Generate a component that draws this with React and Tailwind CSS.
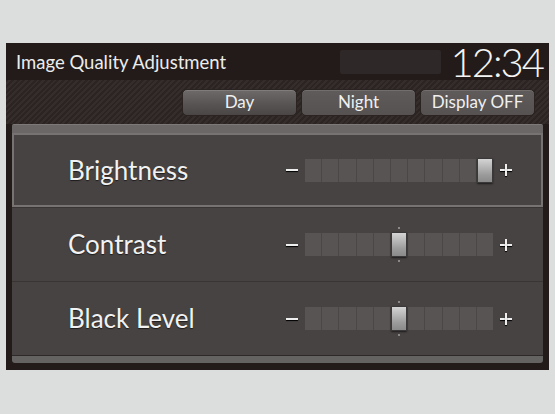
import React from "react";

const rows = [
  { label: "Brightness", value: 10, selected: true, dots: false },
  { label: "Contrast", value: 5, selected: false, dots: true },
  { label: "Black Level", value: 5, selected: false, dots: true },
];

function Slider({ value, dots }) {
  return (
    <div className="flex items-center">
      <span className="w-[12px] h-[2px] bg-[#eeeeee] shadow-[0_1px_1px_#000]" />
      <div className="ml-[7px] flex h-[23px] w-[188px] gap-px bg-[#4b4746] p-0">
        {Array.from({ length: 11 }).map((_, i) =>
          i === value ? (
            <div key={i} className="relative flex-1">
              {dots && (
                <>
                  <span className="absolute left-1/2 -translate-x-1/2 top-[-6px] w-[2px] h-[2px] bg-[#8a8888]" />
                  <span className="absolute left-1/2 -translate-x-1/2 bottom-[-6px] w-[2px] h-[2px] bg-[#8a8888]" />
                </>
              )}
              <div className="absolute inset-x-0 top-[-1px] bottom-[-1px] rounded-[1px] border border-[#3a3838] bg-[linear-gradient(to_bottom,#d4d4d4,#9a9a9a_70%,#8a8a8a)] shadow-[0_1px_2px_rgba(0,0,0,0.6)]" />
            </div>
          ) : (
            <div key={i} className="flex-1 bg-[#575453]" />
          )
        )}
      </div>
      <span className="relative ml-[7px] w-[12px] h-[12px]">
        <span className="absolute left-0 right-0 top-[5px] h-[2px] bg-[#eeeeee] shadow-[0_1px_1px_#000]" />
        <span className="absolute top-0 bottom-0 left-[5px] w-[2px] bg-[#eeeeee] shadow-[0_1px_1px_#000]" />
      </span>
    </div>
  );
}

export default function App() {
  return (
    <div className="w-[555px] h-[414px] bg-[#dcdedd] pt-[43px] pl-[6px] font-['Lato',sans-serif]">
      <div className="w-[543px] h-[327px] bg-[#231b1a] flex flex-col">
        {/* header */}
        <div className="h-[37px] flex items-center pl-[10px] pr-[6px]">
          <span className="text-[18.5px] text-[#ececec] mt-[3px]">Image Quality Adjustment</span>
          <div className="ml-auto w-[101px] h-[24px] bg-[#2f2828] rounded-[2px] mt-[1px]" />
          <span className="ml-[10px] text-[40px] font-light text-[#f4f4f4] leading-none tracking-[-2px] mt-[1px]">
            12:34
          </span>
        </div>
        {/* tab bar */}
        <div className="h-[44px] flex items-center justify-end gap-[4px] pr-[14px] bg-[repeating-linear-gradient(135deg,#2b2423_0px,#2b2423_2px,#342d2c_2px,#342d2c_4px)]">
          {[
            { t: "Day", cls: "bg-[linear-gradient(to_bottom,#6e6a69,#575352_60%,#4a4645)]" },
            { t: "Night", cls: "bg-[linear-gradient(to_bottom,#5f5b5a,#565251)]" },
            { t: "Display OFF", cls: "bg-[linear-gradient(to_bottom,#5f5b5a,#565251)]" },
          ].map((b) => (
            <div
              key={b.t}
              className={`w-[115px] h-[27px] rounded-[5px] flex items-center justify-center text-[17px] text-[#f0f0f0] border border-[#2a2322] shadow-[inset_0_1px_0_rgba(255,255,255,0.12)] ${b.cls}`}
            >
              {b.t}
            </div>
          ))}
        </div>
        {/* panel */}
        <div className="mx-[6px] flex flex-col">
          <div className="h-[9px] rounded-t-[2px] bg-[#6a6766] border-t border-[#7c7978]" />
          {rows.map((r, idx) => (
            <div
              key={r.label}
              className={`h-[74px] flex items-center bg-[#474342] ${
                r.selected
                  ? "border-2 border-[#767372] pl-[54px] bg-[#4a4645]"
                  : "pl-[56px] " + (idx > 0 ? "border-t border-[#3a3433]" : "")
              }`}
            >
              <span className="w-[218px] text-[26px] text-[#f2f2f2] [text-shadow:0_1px_1px_rgba(0,0,0,0.6)]">
                {r.label}
              </span>
              <Slider value={r.value} dots={r.dots} />
            </div>
          ))}
          <div className="h-[8px] rounded-b-[3px] bg-[#656262] border-t border-[#2e2928]" />
        </div>
      </div>
    </div>
  );
}
